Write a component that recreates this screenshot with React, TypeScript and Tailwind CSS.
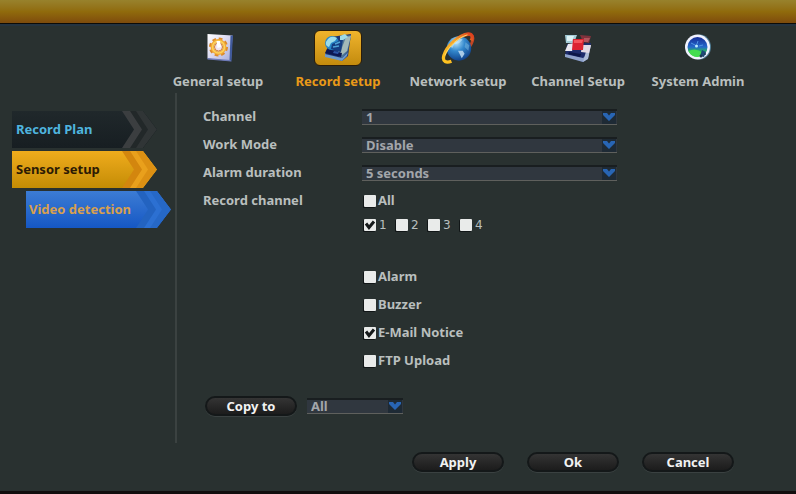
import React, { useState } from 'react';
import clsx from 'clsx';

function GeneralIcon() {
  return (
    <svg viewBox="-4 0 32 30" className="h-[30px] w-8" aria-hidden="true">
      <defs>
        <linearGradient id="page" x1="0" y1="0" x2="1" y2="1">
          <stop offset="0" stopColor="#ffffff" />
          <stop offset=".5" stopColor="#d9d7f0" />
          <stop offset="1" stopColor="#a3abdc" />
        </linearGradient>
      </defs>
      <path d="M1.500 1 26.500 2.500 25 28 1.500 25.500Z" fill="url(#page)" />
      <path d="M24.500 2.500 27 2.500 25.500 28.500 23.500 27.500Z" fill="#405a9c" />
      <path d="M1.500 25 24 27 25.500 28.500 1.500 26.500Z" fill="#6d7ab8" />
      <circle cx="12.500" cy="14" r="8" fill="none" stroke="#dc8b2c" strokeWidth="3" strokeDasharray="3.600 2.680" />
      <circle cx="12.500" cy="14" r="6.200" fill="none" stroke="#f3a935" strokeWidth="3.500" />
      <circle cx="12.500" cy="14" r="6" fill="none" stroke="#fbd45f" strokeWidth="1.500" />
      <circle cx="12.500" cy="14" r="4" fill="#efe4f0" stroke="#d07f36" />
      <path d="M10.500 8 14 8 15 14 11.500 15Z" fill="#ffffff" />
    </svg>
  );
}

function RecordIcon() {
  return (
    <svg viewBox="0 0 30 30" className="h-[30px] w-[30px]" aria-hidden="true">
      <path d="M8 4 28 1 25 23 19 28 2 22Z" fill="#1b3474" />
      <path d="M20 3 28 2 25 18 19 25 14 22Z" fill="#4f7697" />
      <path d="M23 4 28 3 24 18 19 22 17 20Z" fill="#a3b9b8" />
      <path d="M2 21 19 25 25 19 24 23 19 28 2 24Z" fill="#6d9acb" />
      <path d="M4 16 19 20 18 24 2 20Z" fill="#0c1753" />
      <circle cx="9" cy="10" r="7" fill="#2685c8" />
      <path d="M3 9Q7 1 14 5L12 8 8 10 6 14Q2 13 3 9Z" fill="#9bdcea" />
      <path d="M9 11 20 6 18 19 8 16Z" fill="#143d82" />
      <path d="M12 11 17 9M10 14 16 13" stroke="#4fa4d6" strokeWidth="1.500" />
      <path d="M17 3 22 1 25 4 20 7 17 7Z" fill="#9fdbe8" />
      <path d="M11 18 16 19 15 21 10 20Z" fill="#2c55a8" />
    </svg>
  );
}

function NetworkIcon() {
  return (
    <svg viewBox="0 0 36 34" className="h-8 w-[34px]" aria-hidden="true">
      <defs>
        <radialGradient id="globe" cx=".38" cy=".25" r=".8">
          <stop offset="0" stopColor="#b9e6fc" />
          <stop offset=".45" stopColor="#3388cd" />
          <stop offset="1" stopColor="#0c3a83" />
        </radialGradient>
        <linearGradient id="ring" x1="0" y1="1" x2="1" y2="0">
          <stop offset="0" stopColor="#ffc51f" />
          <stop offset=".6" stopColor="#f3a02d" />
          <stop offset="1" stopColor="#dc3c1d" />
        </linearGradient>
      </defs>
      <path d="M8 19C14 9 25 1 32 3c5 3-1 14-8 21" fill="none" stroke="#c24624" strokeWidth="3" />
      <circle cx="19" cy="17.500" r="13" fill="url(#globe)" />
      <path d="M11 10l7-4 5 2-4 4-5 1-2 4-3-2Z" fill="#c9e9f8" opacity=".6" />
      <path d="M18 20l5 0 2 3-3 5-2-4Z" fill="#c9e2f6" opacity=".8" />
      <path d="M26 11l4 3-1 6-4-4Z" fill="#6fb2e0" opacity=".6" />
      <path d="M11 31C6 33 1 32 3 25 6 15 19 3 29 2c4 0 5 3 3 7" fill="none" stroke="url(#ring)" strokeWidth="3.500" />
      <path d="M4 25C8 15 18 6 28 3" fill="none" stroke="#ffe06a" />
    </svg>
  );
}

function ChannelIcon() {
  return (
    <svg viewBox="0 0 30 30" className="h-[30px] w-[30px]" aria-hidden="true">
      <path d="M4 11 28 10 25 26 20 29 2 23Z" fill="#1d2c6c" />
      <path d="M2 21 20 25 26 20 25 25 20 29 2 24Z" fill="#8fa3cb" />
      <path d="M24 15 28 12 25 26 20 29Z" fill="#aebdd8" />
      <path d="M2 2 14 2 11 10 3 10Z" fill="#a5cdd8" />
      <path d="M4 3 11 3 9 8 4 8Z" fill="#dff3f6" />
      <path d="M5 11 12 10 9 18 2 18Z" fill="#ece9f1" />
      <path d="M19 12 28 12 26 20 18 19Z" fill="#e3dbe5" />
      <path d="M17 2 28 3 26 10 20 9Z" fill="#81323c" />
      <path d="M21 5 27 5 25 9 21 9Z" fill="#b2545c" />
      <path d="M10 6 21 6 20 17 9 17Z" fill="#dc2331" />
      <path d="M11 7 20 7 19 10 11 10Z" fill="#f4555b" />
      <path d="M6 19 18 21 17 24 5 21Z" fill="#0c1748" />
    </svg>
  );
}

function SystemIcon() {
  return (
    <svg viewBox="0 0 30 30" className="h-[30px] w-[30px]" aria-hidden="true">
      <defs>
        <linearGradient id="lens" x1="0" y1="0" x2="0" y2="1">
          <stop offset="0" stopColor="#152c96" />
          <stop offset=".5" stopColor="#2468cc" />
          <stop offset=".7" stopColor="#27ab67" />
          <stop offset="1" stopColor="#55e84b" />
        </linearGradient>
      </defs>
      <ellipse cx="17" cy="14" rx="11" ry="12.500" fill="#4f7c93" />
      <circle cx="14.500" cy="14" r="12.500" fill="#f0f2ff" />
      <circle cx="14.500" cy="14" r="10" fill="url(#lens)" />
      <path d="M5.500 18Q13 14 20 20L15 24Q8 24 5.500 18Z" fill="#43dc50" />
      <circle cx="13.500" cy="13" r="1.500" fill="#b9edff" />
      <path d="M8 10 12 12M15 8 14 11M16 13 20 12" stroke="#4f94e4" />
      <path d="M19 17 23 19 21 24 17 23Z" fill="#1c4a78" />
      <circle cx="18" cy="23" r="1.500" fill="#1d3c55" />
      <circle cx="22" cy="21" r="1" fill="#1d3c55" />
    </svg>
  );
}

const TABS = [
  { label: 'General setup', Icon: GeneralIcon },
  { label: 'Record setup', Icon: RecordIcon },
  { label: 'Network setup', Icon: NetworkIcon },
  { label: 'Channel Setup', Icon: ChannelIcon },
  { label: 'System Admin', Icon: SystemIcon },
];

const SIDE_ITEMS = [
  {
    label: 'Record Plan',
    className: 'bg-linear-to-b from-[#20282b] to-[#171e22] pl-1 text-[#4fb4df]',
    chevron: '#3b3e40',
    tail: '#222829',
  },
  {
    label: 'Sensor setup',
    className: 'bg-linear-to-b from-[#f0ac1c] to-[#c48c04] pl-1 text-[#2c1a04]',
    chevron: '#d3860e',
    tail: '#e9a01c',
  },
  {
    label: 'Video detection',
    className: 'ml-[14px] bg-linear-to-b from-[#3c7cd4] to-[#1557c4] pl-[3px] text-[#d9a04e]',
    chevron: '#2363c0',
    tail: '#2c70d2',
  },
];

interface SelectFieldProps {
  id: string;
  options: string[];
  label?: string;
  className?: string;
}

function SelectField({ id, options, label, className }: SelectFieldProps) {
  return (
    <div className={clsx('relative', className)}>
      <select
        id={id}
        aria-label={label}
        className="block h-4 w-full appearance-none border-t-2 border-b border-t-[#191e20] border-b-[#5f605d] bg-[#30373f] pl-1 text-[13px] leading-[13px] font-bold text-[#a3a6ab] outline-none"
      >
        {options.map((option) => (
          <option key={option}>{option}</option>
        ))}
      </select>
      <svg viewBox="0 0 14 13" className="pointer-events-none absolute top-[2px] right-px h-[13px] w-[14px]" aria-hidden="true">
        <path d="M0 0H14V13H0Z" fill="#1e2a35" />
        <path d="M1 2H5L7 4.500 9 2H13V4L7 10 1 4Z" fill="#2865b4" />
      </svg>
    </div>
  );
}

interface CheckProps {
  label: string;
  checked: boolean;
  onChange: () => void;
  digit?: boolean;
}

function Check({ label, checked, onChange, digit }: CheckProps) {
  return (
    <label className="flex items-center gap-[2px]">
      <span className="relative h-3 w-3">
        <input
          type="checkbox"
          checked={checked}
          onChange={onChange}
          className="block h-3 w-3 appearance-none rounded-[1px] bg-[#e9ebea] shadow-[-1px_1px_0_#111617]"
        />
        {checked && (
          <svg viewBox="0 0 12 12" className="pointer-events-none absolute inset-0 h-3 w-3" aria-hidden="true">
            <path d="M2 4.500 5 8.500 10 2.500" fill="none" stroke="#15191a" strokeWidth="3" />
          </svg>
        )}
      </span>
      <span className={digit ? "pl-px font-['DejaVu_Sans',sans-serif] text-xs font-normal" : ''}>{label}</span>
    </label>
  );
}

function PillButton({ children }: { children: React.ReactNode }) {
  return (
    <button
      type="button"
      className="h-5 w-[92px] rounded-full border-2 border-[#141819] bg-linear-to-b from-[#343434] to-[#1c1c1c] text-[13px] leading-4 font-bold text-[#f2f2f2] shadow-[0_1px_0_#3a4141]"
    >
      {children}
    </button>
  );
}

export default function App() {
  const [checked, setChecked] = useState<string[]>(['1', 'E-Mail Notice']);

  const toggle = (name: string) => {
    setChecked(checked.includes(name) ? checked.filter((item) => item !== name) : [...checked, name]);
  };

  return (
    <div className="flex min-h-screen flex-col border-b-3 border-[#120e0e] bg-[#293130] font-['Noto_Sans',sans-serif] text-[13px] font-bold text-[#b9bfbe]">
      <header className="h-6 border-b border-[#0c0b08] bg-linear-to-b from-[#98822c] via-[#906b0c] to-[#7e4b0c]" />

      <nav className="grid grid-cols-5 border-t-2 border-[#243340] pt-1 pr-[38px] pb-[2px] pl-[158px]">
        {TABS.map(({ label, Icon }) => {
          const active = label === 'Record setup';
          return (
            <button
              key={label}
              type="button"
              className={clsx('flex flex-col items-center gap-[5px] leading-5 whitespace-nowrap', active && 'text-[#e99a18]')}
            >
              <span
                className={clsx(
                  'flex h-9 w-12 items-center justify-center rounded-md',
                  active && 'border border-[#2b1d0a] bg-linear-to-b from-[#f0b42c] to-[#c38b0c]'
                )}
              >
                <Icon />
              </span>
              {label}
            </button>
          );
        })}
      </nav>

      <main className="flex">
        <aside className="flex w-[177px] shrink-0 flex-col gap-[3px] border-r-2 border-[#3b4241] pt-[18px] pl-3">
          {SIDE_ITEMS.map((item) => (
            <button
              key={item.label}
              type="button"
              className={clsx(
                'relative h-[37px] w-[145px] shrink-0 text-left [clip-path:polygon(0_0,131px_0,100%_50%,131px_100%,0_100%)]',
                item.className
              )}
            >
              <svg viewBox="0 0 36 37" className="absolute top-0 right-0 h-[37px] w-9" aria-hidden="true">
                <path d="M3 0H22L36 18.500 22 37H3L15 18.500Z" fill={item.tail} />
                <path d="M1 0H9L21 18.500 9 37H1L13 18.500Z" fill={item.chevron} />
                <path d="M15 0H22L36 18.500 22 37H15L27 18.500Z" fill={item.chevron} opacity=".6" />
              </svg>
              <span className="relative">{item.label}</span>
            </button>
          ))}
        </aside>

        <form className="flex-1 pt-[10px] pb-[23px] pl-[26px]">
          <div className="grid auto-rows-[28px] grid-cols-[159px_255px] items-center">
            <label htmlFor="channel">Channel</label>
            <SelectField id="channel" options={['1', '2', '3', '4']} />
            <label htmlFor="work-mode">Work Mode</label>
            <SelectField id="work-mode" options={['Disable', 'Enable']} />
            <label htmlFor="alarm-duration">Alarm duration</label>
            <SelectField id="alarm-duration" options={['5 seconds', '10 seconds', '20 seconds']} />
            <span>Record channel</span>
            <div className="pl-[2px]">
              <Check label="All" checked={checked.includes('All')} onChange={() => toggle('All')} />
            </div>
          </div>

          <div className="pl-[161px]">
            <div className="grid h-5 grid-cols-[repeat(4,32px)] items-center">
              {['1', '2', '3', '4'].map((name) => (
                <Check key={name} digit label={name} checked={checked.includes(name)} onChange={() => toggle(name)} />
              ))}
            </div>
            <div className="mt-7 grid auto-rows-[28px] items-center">
              {['Alarm', 'Buzzer', 'E-Mail Notice', 'FTP Upload'].map((name) => (
                <Check key={name} label={name} checked={checked.includes(name)} onChange={() => toggle(name)} />
              ))}
            </div>
          </div>

          <div className="mt-[17px] flex h-7 items-center gap-[10px] pl-[2px]">
            <PillButton>Copy to</PillButton>
            <SelectField id="copy-target" label="Copy to channel" options={['All', '1', '2', '3', '4']} className="w-24" />
          </div>
        </form>
      </main>

      <footer className="flex justify-end gap-[23px] pt-[9px] pr-[62px] pb-[18px]">
        <PillButton>Apply</PillButton>
        <PillButton>Ok</PillButton>
        <PillButton>Cancel</PillButton>
      </footer>
    </div>
  );
}
